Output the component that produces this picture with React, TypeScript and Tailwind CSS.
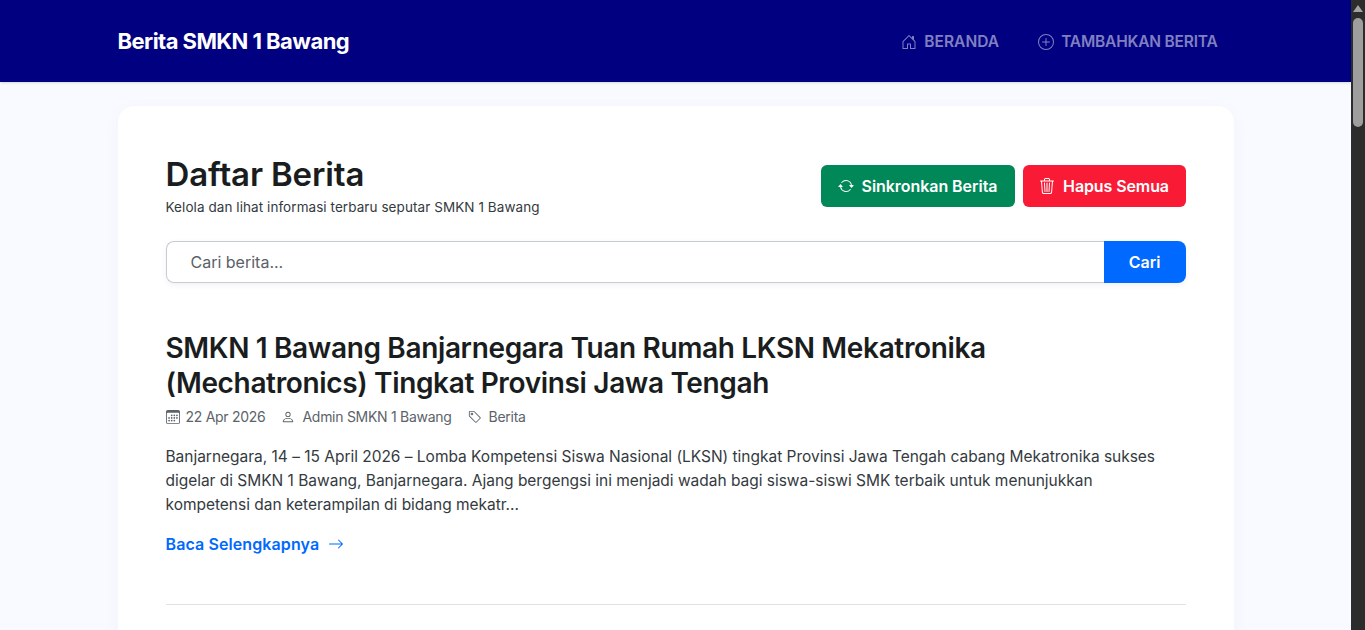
import { BsHouseDoor, BsPlusCircle, BsArrowRepeat, BsTrash3, BsCalendar3, BsPerson, BsTag, BsArrowRight } from 'react-icons/bs';

const App = () => {
  return (
    <div className="flex h-screen overflow-hidden bg-[#f8faff] font-['Inter','Liberation_Sans',sans-serif]">
      <div className="flex-1 min-w-0 overflow-hidden">
        {/* Navbar */}
        <nav className="h-[82px] bg-[#000080] shadow-sm">
          <div className="mx-auto flex h-full w-[1116px] items-center justify-between">
            <a className="text-[22px] font-bold tracking-[-0.55px] text-white">Berita SMKN 1 Bawang</a>
            <div className="flex items-center gap-[39px] pt-px pr-4 text-[15.5px] font-semibold tracking-[-0.2px] text-[#8080c0]">
              <a className="flex items-center gap-[7px] tracking-[0.05px]"><BsHouseDoor className="h-4 w-4" />BERANDA</a>
              <a className="flex items-center gap-[7px]"><BsPlusCircle className="h-4 w-4" />TAMBAHKAN BERITA</a>
            </div>
          </div>
        </nav>

        {/* Card */}
        <main className="mx-auto mt-6 w-[1116px] rounded-2xl bg-white px-12 pt-[49px] pb-12 shadow-[0_4px_20px_rgba(0,0,0,0.03)]">
          <div className="flex items-center justify-between">
            <div>
              <h1 className="text-[33px] font-semibold leading-[38px] tracking-[-0.15px] text-[#1a1d20]">Daftar Berita</h1>
              <p className="mt-[5px] text-[13.5px] leading-[19px] tracking-[0.07px] text-[#343a40]">Kelola dan lihat informasi terbaru seputar SMKN 1 Bawang</p>
            </div>
            <div className="flex gap-2">
              <button className="flex h-[42px] w-[194px] items-center justify-center gap-2 rounded-md bg-[#008858] text-[16px] font-semibold tracking-[-0.05px] text-white">
                <BsArrowRepeat className="h-4 w-4" />Sinkronkan Berita
              </button>
              <button className="flex h-[42px] w-[163px] items-center justify-center gap-2 rounded-md bg-[#f91a35] text-[16px] font-semibold tracking-[-0.1px] text-white">
                <BsTrash3 className="h-4 w-4" />Hapus Semua
              </button>
            </div>
          </div>

          {/* Search */}
          <div className="mt-6 flex h-[42px] rounded-lg shadow-[0_2px_6px_rgba(0,0,0,0.06)]">
            <div className="flex flex-1 items-center rounded-l-lg border border-r-0 border-[#c6ccd2] bg-white pl-6 text-[16px] text-[#5a6168]">Cari berita...</div>
            <button className="w-[82px] rounded-r-lg bg-[#0069ff] text-[16px] font-semibold text-white">Cari</button>
          </div>

          {/* Article */}
          <article className="mt-12 border-b border-[#dee2e6] pb-12">
            <h2 className="text-[28px] font-semibold leading-[35px] tracking-[-0.35px] text-[#1a1d20]">
              SMKN 1 Bawang Banjarnegara Tuan Rumah LKSN Mekatronika<br />(Mechatronics) Tingkat Provinsi Jawa Tengah
            </h2>
            <div className="mt-[6px] flex items-center text-[14px] leading-[20px] tracking-[-0.28px] text-[#5c636a]">
              <span className="flex items-center gap-[6px]"><BsCalendar3 className="h-[14px] w-[14px]" />22 Apr 2026</span>
              <span className="ml-4 flex items-center gap-[7px]"><BsPerson className="h-[14px] w-[14px]" />Admin SMKN 1 Bawang</span>
              <span className="ml-4 flex items-center gap-[7px]"><BsTag className="h-[14px] w-[14px]" />Berita</span>
            </div>
            <p className="mt-[18px] text-[15.5px] leading-[24px] tracking-[-0.02px] text-[#343a40]">
              Banjarnegara, 14 – 15 April 2026 – Lomba Kompetensi Siswa Nasional (LKSN) tingkat Provinsi Jawa Tengah cabang Mekatronika sukses<br />digelar di SMKN 1 Bawang, Banjarnegara. Ajang bergengsi ini menjadi wadah bagi siswa-siswi SMK terbaik untuk menunjukkan<br />kompetensi dan keterampilan di bidang mekatr...
            </p>
            <a className="mt-[15px] flex items-center gap-[9px] text-[16px] font-semibold leading-[24px] tracking-[0.1px] text-[#0069ff]">
              Baca Selengkapnya<BsArrowRight className="h-4 w-4" />
            </a>
          </article>
          <div className="h-[200px]" />
        </main>
      </div>

      {/* Scrollbar */}
      <div className="flex w-[14px] shrink-0 flex-col items-center bg-[#2c2c2c]">
        <svg viewBox="0 0 10 7" className="mt-[5px] h-[7px] w-[10px]"><path d="M5 0 L10 7 L0 7 Z" fill="#a3a3a3" /></svg>
        <div className="mt-[6px] h-[109px] w-[10px] rounded-full bg-[#9e9e9e]" />
      </div>
    </div>
  );
};

export default App;
